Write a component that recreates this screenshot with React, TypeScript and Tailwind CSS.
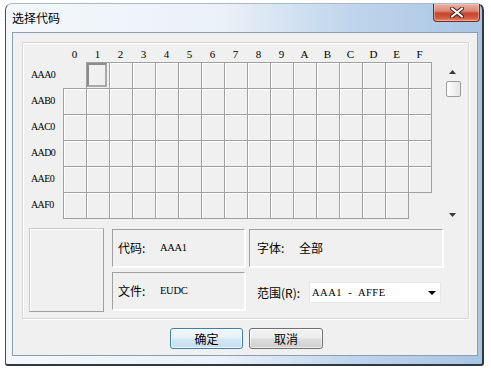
import React from 'react';

const cols = ['0', '1', '2', '3', '4', '5', '6', '7', '8', '9', 'A', 'B', 'C', 'D', 'E', 'F'];
const rows = ['AAA0', 'AAB0', 'AAC0', 'AAD0', 'AAE0', 'AAF0'];

function Cell({ r, c }: { r: number; c: number }) {
  if (r === 0 && c === 0) return <div className="w-[23px] h-[26px] shrink-0" />;
  if (r === 5 && c === 15) return null;
  const right = c === 15 || (r === 5 && c === 14);
  const bottom = r === 5 || (r === 4 && c === 15);
  const w = right ? 'w-[24px] border-r' : 'w-[23px]';
  const h = bottom ? 'h-[27px] border-b' : 'h-[26px]';
  return (
    <div
      className={`${w} ${h} shrink-0 border-t border-l border-[#a0a0a0] shadow-[inset_1px_1px_0_#ffffff] bg-[#f0f0f0]`}
    >
      {r === 0 && c === 1 && (
        <div className="w-[20px] h-[24px] border-2 border-t-[#8c8c8c] border-l-[#8c8c8c] border-r-[#a8a8a8] border-b-[#a8a8a8] bg-[#f0f0f0]" />
      )}
    </div>
  );
}

function SunkenBox({
  label,
  value,
  cjkValue,
  wide,
}: {
  label: string;
  value: string;
  cjkValue?: boolean;
  wide?: boolean;
}) {
  return (
    <div
      className={`${wide ? 'pl-[7px]' : 'pl-[5px]'} h-[38px] flex items-center border border-t-[#a0a0a0] border-l-[#a0a0a0] border-r-[#ffffff] border-b-[#ffffff] shadow-[1px_1px_0_#ffffff]`}
    >
      <span className="w-[42px] text-[12px] leading-[16px] text-black">{label}</span>
      <span
        className={
          cjkValue
            ? 'text-[12px] leading-[16px] text-black'
            : "font-['Liberation_Serif',serif] text-[10.5px] leading-[14px] tracking-[-0.3px] text-black"
        }
      >
        {value}
      </span>
    </div>
  );
}

export default function App() {
  return (
    <div className="w-[491px] h-[369px] bg-white overflow-hidden font-['Noto_Sans_CJK_SC',sans-serif]">
      {/* window */}
      <div className="ml-[5px] mt-[3px] w-[479px] h-[363px] flex flex-col rounded-t-[7px] rounded-b-[3px] border-t border-l border-r-2 border-b-2 border-t-[#a9b9cb] border-l-[#46515d] border-r-[#2f3944] border-b-[#2f3944] bg-[linear-gradient(to_right,#f4f8fc_0%,#ebf1f8_45%,#c0d5ec_72%,#a9c5e4_100%)]">
        {/* title bar */}
        <div className="h-[28px] flex justify-between items-start shrink-0">
          <div className="pl-[6px] pt-[6px] text-[12px] leading-[16px] text-black">选择代码</div>
          <div className="mr-[2px] w-[47px] h-[18px] flex items-center justify-center rounded-b-[4px] border border-t-0 border-[#7a2a1c] bg-[linear-gradient(to_bottom,#eab1a4_0%,#dc8a77_40%,#c7452d_55%,#d0583f_80%,#e08a6c_100%)] shadow-[inset_0_0_0_1px_rgba(255,210,200,0.45)]">
            <svg width="14" height="11" viewBox="0 0 14 11">
              <path d="M2 1.5 L12 9.5 M12 1.5 L2 9.5" stroke="#4a1a12" strokeWidth="4" strokeLinecap="round" />
              <path d="M2 1.5 L12 9.5 M12 1.5 L2 9.5" stroke="#ffffff" strokeWidth="2.2" strokeLinecap="round" />
            </svg>
          </div>
        </div>

        {/* client area */}
        <div className="ml-[6px] w-[466px] h-[324px] shrink-0 border border-[#8a9db3] bg-[#f0f0f0] flex flex-col">
          {/* panel */}
          <div className="ml-[9px] mt-[9px] w-[447px] h-[277px] border border-[#d6d6d6] shadow-[inset_1px_1px_0_#ffffff,1px_1px_0_#ffffff] flex flex-col">
            {/* top: grid + scrollbar */}
            <div className="flex items-start h-[180px]">
              <div className="flex flex-col">
                <div className="h-[19px] flex items-center pt-[2px]">
                  <div className="w-[40px]" />
                  {cols.map((c) => (
                    <div
                      key={c}
                      className="w-[23px] text-center font-['Liberation_Serif',serif] text-[11px] leading-[12px] text-black"
                    >
                      {c}
                    </div>
                  ))}
                </div>
                {rows.map((label, r) => (
                  <div key={label} className="h-[26px] flex items-start">
                    <div className="w-[40px] h-[26px] pl-[8px] flex items-center font-['Liberation_Serif',serif] text-[10px] leading-[12px] tracking-[-0.6px] text-black">
                      {label}
                    </div>
                    {cols.map((_, c) => (
                      <Cell key={c} r={r} c={c} />
                    ))}
                  </div>
                ))}
              </div>
              {/* scrollbar */}
              <div className="ml-[12px] mt-[20px] w-[17px] h-[160px] flex flex-col items-center">
                <div className="h-[17px] w-full flex items-center justify-center">
                  <svg width="7" height="4" viewBox="0 0 7 4">
                    <polygon points="3.5,0 7,4 0,4" fill="#3a3a3a" />
                  </svg>
                </div>
                <div className="mt-[1px] ml-[2px] w-[15px] h-[16px] rounded-[2px] border border-[#9c9c9c] bg-[linear-gradient(to_right,#ffffff,#e4e4e4)]" />
                <div className="flex-1" />
                <div className="h-[17px] w-full flex items-center justify-center">
                  <svg width="7" height="4" viewBox="0 0 7 4">
                    <polygon points="0,0 7,0 3.5,4" fill="#3a3a3a" />
                  </svg>
                </div>
              </div>
            </div>

            {/* bottom: preview + info */}
            <div className="mt-[5px] flex items-start">
              <div className="ml-[6px] w-[75px] h-[84px] border border-t-[#c8c8c8] border-l-[#c8c8c8] border-r-[#a0a0a0] border-b-[#a0a0a0] shadow-[inset_1px_1px_0_#ffffff]" />
              <div className="ml-[8px] mt-[1px] w-[133px] flex flex-col gap-[5px]">
                <SunkenBox label="代码:" value="AAA1" />
                <SunkenBox label="文件:" value="EUDC" />
              </div>
              <div className="ml-[4px] mt-[1px] w-[194px] flex flex-col">
                <SunkenBox label="字体:" value="全部" cjkValue wide />
                <div className="mt-[15px] flex items-center pl-[8px]">
                  <span className="w-[52px] text-[12px] leading-[16px] text-black whitespace-nowrap">范围(R):</span>
                  <div className="w-[132px] h-[21px] bg-white border border-[#e8e8e8] flex items-center justify-between pl-[2px] pr-[4px]">
                    <span className="font-['Liberation_Serif',serif] text-[10.5px] leading-[12px] tracking-[0.5px] text-black whitespace-pre">
                      AAA1  -  AFFE
                    </span>
                    <svg width="8" height="4" viewBox="0 0 8 4">
                      <polygon points="0,0 8,0 4,4" fill="#000000" />
                    </svg>
                  </div>
                </div>
              </div>
            </div>
          </div>

          {/* buttons */}
          <div className="mt-[9px] pl-[157px] flex gap-[6px]">
            <button className="w-[73px] h-[21px] rounded-[3px] border border-[#3c7fb1] bg-[linear-gradient(to_bottom,#f2f8fc_0%,#e6f1f9_48%,#d4e7f5_52%,#c6dff1_100%)] shadow-[inset_0_0_0_1px_rgba(255,255,255,0.7)] text-[12px] leading-[16px] text-black">
              确定
            </button>
            <button className="w-[74px] h-[21px] rounded-[3px] border border-[#707070] bg-[linear-gradient(to_bottom,#f2f2f2_0%,#ebebeb_48%,#dddddd_52%,#cfcfcf_100%)] shadow-[inset_0_0_0_1px_rgba(255,255,255,0.6)] text-[12px] leading-[16px] text-black">
              取消
            </button>
          </div>
        </div>
      </div>
    </div>
  );
}
